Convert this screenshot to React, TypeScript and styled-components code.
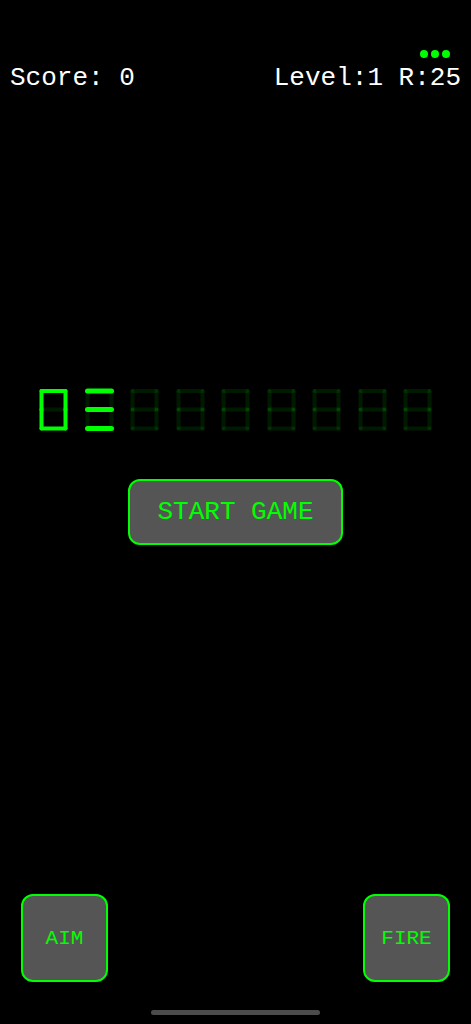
import React from "react";
import styled, { createGlobalStyle } from "styled-components";

const GREEN = "#00ff00";

const GlobalStyle = createGlobalStyle`
  * { box-sizing: border-box; }
  body {
    margin: 0;
    background: #000;
    color: #fff;
    font-family: "Courier New", "Liberation Mono", monospace;
  }
`;

const Screen = styled.main`
  display: flex;
  flex-direction: column;
  min-height: 100vh;
  padding: 50px 0 9px;
`;

const Lives = styled.div`
  display: flex;
  justify-content: flex-end;
  gap: 3px;
  padding: 0 21px;
`;

const Life = styled.span`
  width: 8px;
  height: 8px;
  border-radius: 50%;
  background: ${GREEN};
`;

const StatusBar = styled.header`
  display: flex;
  justify-content: space-between;
  padding: 5px 10px 0;
  font-size: 26px;
  line-height: 30px;
  white-space: pre;
`;

const Field = styled.section`
  display: flex;
  flex: 1;
  flex-direction: column;
  align-items: center;
  justify-content: center;
  gap: 48px;
  padding: 0 39px 54px;
`;

const Display = styled.div`
  display: flex;
  justify-content: space-between;
  align-self: stretch;
`;

const Digit = styled.svg`
  width: 29px;
  height: 43px;
`;

const GameButton = styled.button`
  padding: 0;
  border: 2px solid ${GREEN};
  border-radius: 12px;
  background: #555;
  color: ${GREEN};
  font-family: inherit;
  cursor: pointer;
`;

const StartButton = styled(GameButton)`
  width: 215px;
  height: 66px;
  font-size: 26px;
`;

const PadButton = styled(GameButton)`
  width: 87px;
  height: 88px;
  font-size: 21px;
`;

const Controls = styled.footer`
  display: flex;
  justify-content: space-between;
  padding: 0 21px 28px;
`;

const HomeIndicator = styled.div`
  align-self: center;
  width: 36%;
  height: 5px;
  border-radius: 3px;
  background: #4c4c4c;
`;

type Segment = "a" | "b" | "c" | "d" | "e" | "f" | "g";

const SEGMENTS: Record<Segment, string> = {
  a: "M2.5 3H26.5",
  b: "M26.5 3V21.5",
  c: "M26.5 21.5V40.5",
  d: "M2.5 40.5H26.5",
  e: "M2.5 21.5V40.5",
  f: "M2.5 3V21.5",
  g: "M2.5 21.5H26.5",
};

const NAMES = Object.keys(SEGMENTS) as Segment[];

const CELLS = ["abcdef", "adg", "", "", "", "", "", "", ""];

function SevenSegment({ lit }: { lit: string }) {
  const on = NAMES.filter((name) => lit.includes(name));
  const off = NAMES.filter((name) => !lit.includes(name));
  const weight = lit.includes("b") ? 4 : 5;
  return (
    <Digit viewBox="0 0 29 43" fill="none" stroke={GREEN} strokeLinecap="round" aria-hidden="true">
      {off.map((name) => (
        <path key={name} d={SEGMENTS[name]} strokeWidth={4} strokeOpacity={0.1} />
      ))}
      {on.map((name) => (
        <path key={name} d={SEGMENTS[name]} strokeWidth={weight} />
      ))}
    </Digit>
  );
}

export default function App() {
  return (
    <>
      <GlobalStyle />
      <Screen>
        <Lives>
          <Life />
          <Life />
          <Life />
        </Lives>
        <StatusBar>
          <span>Score: 0</span>
          <span>Level:1 R:25</span>
        </StatusBar>
        <Field>
          <Display>
            {CELLS.map((lit, index) => (
              <SevenSegment key={index} lit={lit} />
            ))}
          </Display>
          <StartButton type="button">START GAME</StartButton>
        </Field>
        <Controls>
          <PadButton type="button">AIM</PadButton>
          <PadButton type="button">FIRE</PadButton>
        </Controls>
        <HomeIndicator />
      </Screen>
    </>
  );
}
